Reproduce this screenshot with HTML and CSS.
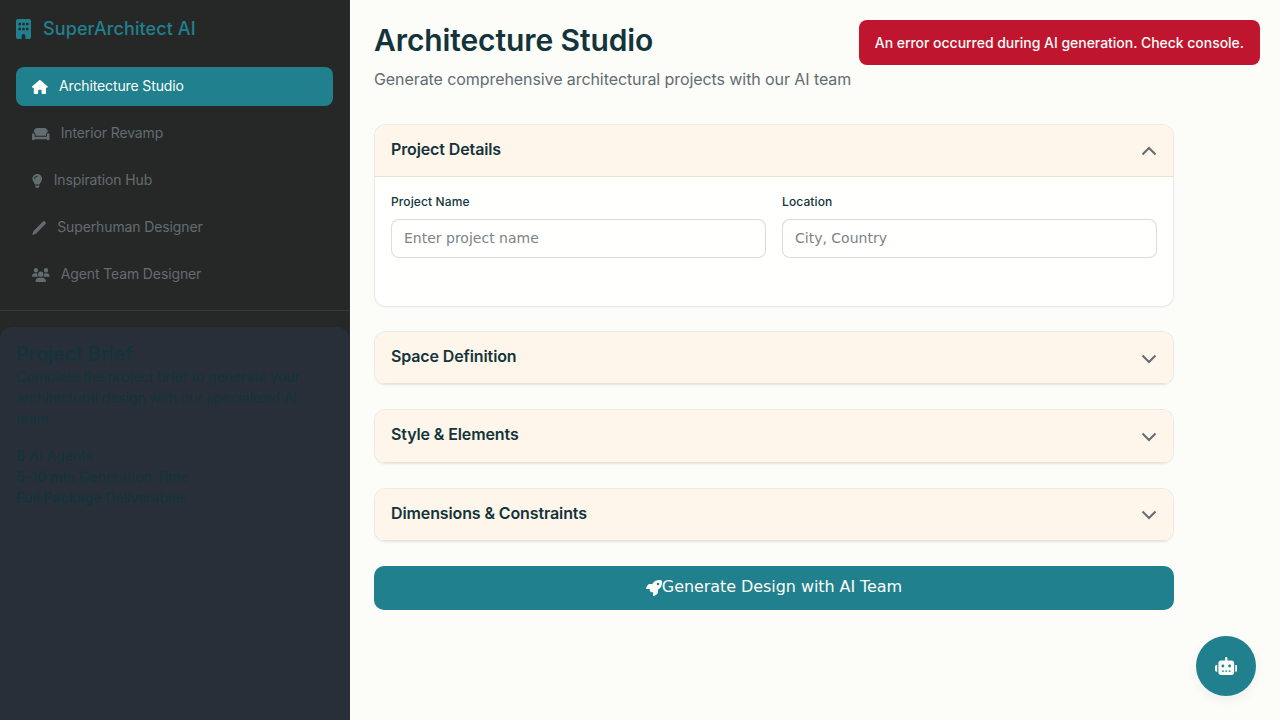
FILE: index.html
```html
<!DOCTYPE html>
<html lang="en">
<head>
<meta charset="utf-8">
<title>SuperArchitect AI</title>
<link rel="stylesheet" href="styles.css">
</head>
<body>
<div class="app">
  <aside class="sidebar">
    <div class="brand">
      <svg class="brand-icon" viewBox="0 0 384 512"><path d="M48 0C21.5 0 0 21.5 0 48V464c0 26.5 21.5 48 48 48h96V432c0-26.5 21.5-48 48-48s48 21.5 48 48v80h96c26.5 0 48-21.5 48-48V48c0-26.5-21.5-48-48-48H48zM64 240c0-8.8 7.2-16 16-16h32c8.8 0 16 7.2 16 16v32c0 8.8-7.2 16-16 16H80c-8.8 0-16-7.2-16-16V240zm112-16h32c8.8 0 16 7.2 16 16v32c0 8.8-7.2 16-16 16H176c-8.8 0-16-7.2-16-16V240c0-8.8 7.2-16 16-16zm80 16c0-8.8 7.2-16 16-16h32c8.8 0 16 7.2 16 16v32c0 8.8-7.2 16-16 16H272c-8.8 0-16-7.2-16-16V240zM80 96h32c8.8 0 16 7.2 16 16v32c0 8.8-7.2 16-16 16H80c-8.8 0-16-7.2-16-16V112c0-8.8 7.2-16 16-16zm80 16c0-8.8 7.2-16 16-16h32c8.8 0 16 7.2 16 16v32c0 8.8-7.2 16-16 16H176c-8.8 0-16-7.2-16-16V112zM272 96h32c8.8 0 16 7.2 16 16v32c0 8.8-7.2 16-16 16H272c-8.8 0-16-7.2-16-16V112c0-8.8 7.2-16 16-16z"/></svg>
      <span class="brand-name">SuperArchitect AI</span>
    </div>
    <nav class="nav">
      <a class="nav-item active"><svg class="i-house" viewBox="0 0 576 512"><path d="M575.8 255.5c0 18-15 32.1-32 32.1h-32l.7 160.2c0 2.7-.2 5.4-.5 8.1V472c0 22.1-17.9 40-40 40H456c-1.1 0-2.2 0-3.3-.1c-1.4 .1-2.8 .1-4.2 .1H416 392c-22.1 0-40-17.9-40-40V448 384c0-17.7-14.3-32-32-32H256c-17.7 0-32 14.3-32 32v64 24c0 22.1-17.9 40-40 40H160 128.1c-1.5 0-3-.1-4.5-.2c-1.2 .1-2.4 .2-3.6 .2H104c-22.1 0-40-17.9-40-40V360c0-.9 0-1.9 .1-2.8V287.6H32c-18 0-32-14-32-32.1c0-9 3-17 10-24L266.4 8c7-7 15-8 22-8s15 2 21 7L564.8 231.5c8 7 12 15 11 24z"/></svg><span>Architecture Studio</span></a>
      <a class="nav-item"><svg class="i-wide" viewBox="0 0 640 512"><path d="M64 160C64 89.3 121.3 32 192 32H448c70.7 0 128 57.3 128 128v33.6c-36.5 7.4-64 39.7-64 78.4v48H128V272c0-38.7-27.5-71-64-78.4V160zM544 272c0-20.9 13.4-38.7 32-45.3c5-1.8 10.4-2.7 16-2.7c26.5 0 48 21.5 48 48V448c0 17.7-14.3 32-32 32H576c-17.7 0-32-14.3-32-32H96c0 17.7-14.3 32-32 32H32c-17.7 0-32-14.3-32-32V272c0-26.5 21.5-48 48-48c5.6 0 11 1 16 2.7c18.6 6.6 32 24.4 32 45.3v48 32h32H512h32V320 272z"/></svg><span>Interior Revamp</span></a>
      <a class="nav-item"><svg class="i-bulb" viewBox="0 0 384 512"><path d="M272 384c9.6-31.9 29.5-59.1 49.2-86.2l0 0c5.2-7.1 10.4-14.2 15.4-21.4c19.8-28.5 31.4-63 31.4-100.3C368 78.8 289.2 0 192 0S16 78.8 16 176c0 37.3 11.6 71.9 31.4 100.3c5 7.2 10.2 14.3 15.4 21.4l0 0c19.8 27.1 39.7 54.4 49.2 86.2H272zM192 512c44.2 0 80-35.8 80-80V416H112v16c0 44.2 35.8 80 80 80zM112 176c0 8.8-7.2 16-16 16s-16-7.2-16-16c0-61.9 50.1-112 112-112c8.8 0 16 7.2 16 16s-7.2 16-16 16c-44.2 0-80 35.8-80 80z"/></svg><span>Inspiration Hub</span></a>
      <a class="nav-item"><svg class="i-pen" viewBox="0 0 512 512"><path d="M400 20c20-20 50-20 70 0l22 22c20 20 20 50 0 70L160 445c-8 8-18 14-28 17L30 500C15 505 5 495 10 480L50 380c3-10 9-20 17-28z"/></svg><span>Superhuman Designer</span></a>
      <a class="nav-item"><svg class="i-wide" viewBox="0 0 640 512"><path d="M144 0a80 80 0 1 1 0 160A80 80 0 1 1 144 0zM512 0a80 80 0 1 1 0 160A80 80 0 1 1 512 0zM0 298.7C0 239.8 47.8 192 106.7 192h42.7c15.9 0 31 3.5 44.6 9.7c-1.3 7.2-1.9 14.7-1.9 22.3c0 38.2 16.8 72.5 43.3 96c-.2 0-.4 0-.7 0H21.3C9.6 320 0 310.4 0 298.7zM405.3 320c-.2 0-.4 0-.7 0c26.6-23.5 43.3-57.8 43.3-96c0-7.6-.7-15-1.9-22.3c13.6-6.3 28.7-9.7 44.6-9.7h42.7C592.2 192 640 239.8 640 298.7c0 11.8-9.6 21.3-21.3 21.3H405.3zM224 224a96 96 0 1 1 192 0 96 96 0 1 1 -192 0zM128 485.3C128 411.7 187.7 352 261.3 352H378.7C452.3 352 512 411.7 512 485.3c0 14.7-11.9 26.7-26.7 26.7H154.7c-14.7 0-26.7-11.9-26.7-26.7z"/></svg><span>Agent Team Designer</span></a>
    </nav>
    <section class="brief">
      <h3 class="brief-title">Project Brief</h3>
      <p class="brief-text">Complete the project brief to generate your architectural design with our specialized AI team.</p>
      <ul class="brief-stats">
        <li><strong>8</strong> AI Agents</li>
        <li><strong>5-10 min</strong> Generation Time</li>
        <li><strong>Full Package</strong> Deliverables</li>
      </ul>
    </section>
  </aside>
  <main class="main">
    <div class="toast">An error occurred during AI generation. Check console.</div>
    <div class="content">
      <header class="page-head">
        <h1>Architecture Studio</h1>
        <p>Generate comprehensive architectural projects with our AI team</p>
      </header>
      <section class="card open">
        <div class="card-head"><h2>Project Details</h2><svg class="chev" viewBox="0 0 16 10"><path d="M1.5 8.5 8 2l6.5 6.5"/></svg></div>
        <div class="card-body">
          <div class="field"><label>Project Name</label><input type="text" placeholder="Enter project name"></div>
          <div class="field"><label>Location</label><input type="text" placeholder="City, Country"></div>
        </div>
      </section>
      <section class="card">
        <div class="card-head"><h2>Space Definition</h2><svg class="chev" viewBox="0 0 16 10"><path d="M1.5 1.5 8 8l6.5-6.5"/></svg></div>
      </section>
      <section class="card">
        <div class="card-head"><h2>Style &amp; Elements</h2><svg class="chev" viewBox="0 0 16 10"><path d="M1.5 1.5 8 8l6.5-6.5"/></svg></div>
      </section>
      <section class="card">
        <div class="card-head"><h2>Dimensions &amp; Constraints</h2><svg class="chev" viewBox="0 0 16 10"><path d="M1.5 1.5 8 8l6.5-6.5"/></svg></div>
      </section>
      <button class="generate" type="button"><svg class="rocket" viewBox="0 0 512 512"><path d="M156.6 384.9L125.7 354c-8.5-8.5-11.5-20.8-7.7-32.2c3-8.9 7-20.5 11.8-33.8L24 288c-8.6 0-16.6-4.6-20.9-12.1s-4.2-16.7 .2-24.1l52.5-88.5c13-21.9 36.5-35.3 61.9-35.3l82.3 0c2.4-4 4.8-7.7 7.2-11.3C289.1-4.1 411.1-8.1 483.9 5.3c11.6 2.1 20.6 11.2 22.8 22.8c13.4 72.9 9.3 194.8-111.4 276.7c-3.5 2.4-7.3 4.8-11.3 7.2v82.3c0 25.4-13.4 49-35.3 61.9l-88.5 52.5c-7.4 4.4-16.6 4.5-24.1 .2s-12.1-12.2-12.1-20.9V380.8c-14.1 4.9-26.4 8.9-35.7 11.9c-11.2 3.6-23.4 .5-31.8-7.8zM384 168a40 40 0 1 0 0-80 40 40 0 1 0 0 80z"/></svg><span>Generate Design with AI Team</span></button>
    </div>
    <button class="fab" type="button" aria-label="Assistant"><svg viewBox="0 0 640 512"><path d="M320 0c17.7 0 32 14.3 32 32V96H472c39.8 0 72 32.2 72 72V440c0 39.8-32.2 72-72 72H168c-39.8 0-72-32.2-72-72V168c0-39.8 32.2-72 72-72H288V32c0-17.7 14.3-32 32-32zM208 384c-8.8 0-16 7.2-16 16s7.2 16 16 16h32c8.8 0 16-7.2 16-16s-7.2-16-16-16H208zm96 0c-8.8 0-16 7.2-16 16s7.2 16 16 16h32c8.8 0 16-7.2 16-16s-7.2-16-16-16H304zm96 0c-8.8 0-16 7.2-16 16s7.2 16 16 16h32c8.8 0 16-7.2 16-16s-7.2-16-16-16H400zM264 256a40 40 0 1 0 -80 0 40 40 0 1 0 80 0zm152 40a40 40 0 1 0 0-80 40 40 0 1 0 0 80zM48 224H64V416H48c-26.5 0-48-21.5-48-48V272c0-26.5 21.5-48 48-48zm544 0c26.5 0 48 21.5 48 48v96c0 26.5-21.5 48-48 48H576V224h16z"/></svg></button>
  </main>
</div>
</body>
</html>
```
FILE: styles.css
```css
* { box-sizing: border-box; }
html, body { margin: 0; height: 100%; }
body { font-family: Inter, "Liberation Sans", sans-serif; background: #fcfcf9; color: #13343b; overflow: hidden; }
.app { display: flex; height: 720px; }

.sidebar { width: 350px; flex: none; background: #262828; border-right: 1px solid #2c2e2e; display: flex; flex-direction: column; }
.brand { display: flex; align-items: center; gap: 12px; height: 58px; padding: 0 16px; }
.brand-icon { width: 15px; height: 20px; fill: #21808d; flex: none; }
.brand-name { padding-bottom: 1px; font-size: 18px; font-weight: 550; letter-spacing: 0.1px; color: #21808d; }
.nav { display: flex; flex-direction: column; gap: 8px; padding: 9px 16px 16px; border-bottom: 1px solid #383a3a; height: 253px; }
.nav-item { display: flex; align-items: center; gap: 11.2px; height: 39px; padding: 0 16px; border-radius: 8px; font-size: 14px; letter-spacing: -0.12px; color: #626c71; }
.nav-item span { padding-bottom: 2px; }
.nav-item svg { height: 14px; fill: #626c71; flex: none; }
.i-house { width: 15.75px; }
.i-wide { width: 17.5px; }
.i-bulb { width: 10.5px; }
.i-pen { width: 14px; }
.nav-item.active { background: #21808d; color: #fcfcf9; }
.nav-item.active svg { fill: #fcfcf9; }

.brief { flex: 1; margin-top: 16px; background: #282f38; border-radius: 12px 12px 0 0; padding: 16px; color: #13343b; }
.brief-title { margin: 0; font-size: 19.5px; font-weight: 600; line-height: 23px; }
.brief-text { margin: 0 0 16px; font-size: 14px; line-height: 21px; letter-spacing: -0.07px; }
.brief-stats { list-style: none; margin: 0; padding: 0; font-size: 14px; line-height: 21px; }
.brief-stats strong { font-weight: 600; }

.main { flex: 1; position: relative; padding: 24px; }
.content { width: 800px; }
.page-head { margin-bottom: 33px; }
.page-head h1 { margin: 0 0 10px; font-size: 30px; font-weight: 600; line-height: 33px; letter-spacing: -0.1px; color: #13343b; }
.page-head p { margin: 0; font-size: 16px; line-height: 24px; letter-spacing: -0.08px; color: #626c71; }

.toast { position: absolute; top: 20px; right: 20px; padding: 12px 16px; border-radius: 8px; background: #c0152f; color: #fcfcf9; font-size: 14px; font-weight: 550; line-height: 21px; letter-spacing: -0.03px; }

.card { margin-bottom: 24px; background: #fffffd; border: 1px solid rgba(94, 82, 64, 0.12); border-radius: 12px; box-shadow: 0 1px 2px rgba(0, 0, 0, 0.04); overflow: hidden; }
.card-head { display: flex; align-items: center; justify-content: space-between; height: 52.3px; padding: 0 16px; background: #fff6eb; border-bottom: 1px solid rgba(94, 82, 64, 0.12); }
.card.open .card-head { height: 52px; }
.card-head h2 { margin: 0; padding-bottom: 3px; font-size: 16px; font-weight: 600; letter-spacing: -0.12px; color: #13343b; }
.chev { width: 16px; height: 10px; margin-top: 2px; fill: none; stroke: #626c71; stroke-width: 2; }
.card.open .chev { margin-top: 0; }
.card-body { display: grid; grid-template-columns: 1fr 1fr; gap: 16px; padding: 16px 16px 48px; height: 129px; }
.field label { display: block; margin-bottom: 8px; font-size: 12px; font-weight: 500; line-height: 18px; letter-spacing: 0.12px; color: #13343b; }
.field input { display: block; width: 100%; height: 39px; padding: 0 12px 2px; font: 14px "DejaVu Sans", sans-serif; color: #13343b; background: #fffffd; border: 1px solid rgba(94, 82, 64, 0.2); border-radius: 8px; }
.field input::placeholder { color: #7b8488; opacity: 1; }

.generate { display: flex; align-items: center; justify-content: center; width: 100%; height: 44px; border: 0; border-radius: 10px; background: #21808d; color: #fcfcf9; font: 16px "DejaVu Sans", sans-serif; letter-spacing: -0.07px; }
.generate span { padding-bottom: 2px; }
.rocket { width: 16px; height: 16px; fill: #fcfcf9; flex: none; }

.fab { position: absolute; right: 24px; bottom: 24px; display: flex; align-items: center; justify-content: center; width: 60px; height: 60px; padding: 0; border: 0; border-radius: 50%; background: #21808d; box-shadow: 0 4px 12px rgba(0, 0, 0, 0.06); }
.fab svg { width: 22.5px; height: 18px; fill: #fcfcf9; }
```
